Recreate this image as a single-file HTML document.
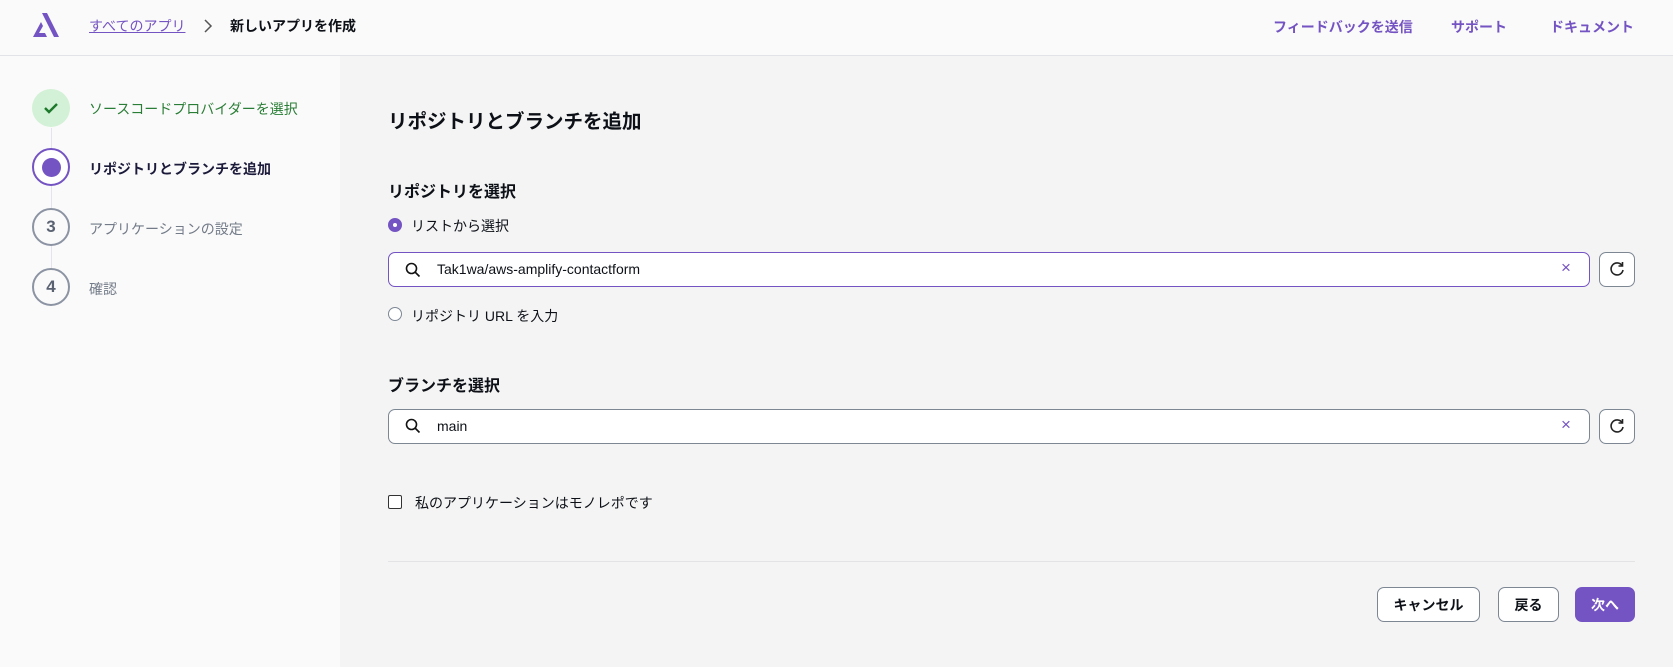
<!DOCTYPE html>
<html><head><meta charset="utf-8"><style>
*{box-sizing:border-box;margin:0;padding:0}
body{width:1673px;height:667px;overflow:hidden;background:#f4f4f4;font-family:"Liberation Sans","Noto Sans CJK JP",sans-serif;color:#0d1117;position:relative;font-size:14px}
.a{position:absolute;white-space:nowrap}
.hdr{position:absolute;left:0;top:0;width:1673px;height:56px;background:#fafafa;border-bottom:1px solid #e2e3e8}
.side{position:absolute;left:0;top:56px;width:340px;height:611px;background:#fafafa}
.p{color:#7453c2}
.circ{position:absolute;width:38px;height:38px;border-radius:50%;left:32px;display:flex;align-items:center;justify-content:center;font-weight:bold;font-size:17px;color:#5a6272}
.inp{position:absolute;left:388px;width:1202px;height:35px;background:#fff;border-radius:7px}
.rb{position:absolute;left:1599px;width:36px;height:35px;background:#fff;border:1px solid #7d8794;border-radius:7px}
.btn{position:absolute;top:587px;height:35px;border-radius:7px;border:1px solid #7d8794;background:#fff;font-weight:bold;font-size:14px;display:flex;align-items:center;justify-content:center}
</style></head><body>
<div class="hdr"></div>
<svg class="a" style="left:31px;top:13px" width="30" height="24" viewBox="0 0 30 24"><path d="M11 0h5l12 24h-5z" fill="#7453c2"/><path d="M10 9l-8 15h14l-2-4H8l4-7z" fill="#7453c2"/></svg>
<div class="a p" style="left:89px;top:16px;font-size:14px;text-decoration:underline">すべてのアプリ</div>
<svg class="a" style="left:203px;top:18px" width="10" height="16"><path d="M2 2l6 6-6 6" stroke="#555" stroke-width="1.5" fill="none"/></svg>
<div class="a" style="left:230px;top:16px;font-size:14px;font-weight:bold">新しいアプリを作成</div>
<div class="a p" style="left:1273px;top:17px;font-size:14px;font-weight:bold">フィードバックを送信</div>
<div class="a p" style="left:1451px;top:17px;font-size:14px;font-weight:bold">サポート</div>
<div class="a p" style="left:1550px;top:17px;font-size:14px;font-weight:bold">ドキュメント</div>
<div class="side"></div>
<div class="a" style="left:51px;top:128px;width:1px;height:160px;background:#e4e5ea"></div>
<div class="circ" style="top:89px;background:#d3f1d6"><svg width="16" height="14"><path d="M2 7l4 4 8-8" stroke="#1d7a2c" stroke-width="2.4" fill="none"/></svg></div>
<div class="circ" style="top:148px;border:2px solid #7453c2;background:#fff"><div style="width:19px;height:19px;border-radius:50%;background:#7453c2"></div></div>
<div class="circ" style="top:208px;border:2px solid #8c94a3;background:#fafafa">3</div>
<div class="circ" style="top:268px;border:2px solid #8c94a3;background:#fafafa">4</div>
<div class="a" style="left:89px;top:99px;color:#2a7d36">ソースコードプロバイダーを選択</div>
<div class="a" style="left:89px;top:159px;font-weight:bold;color:#1b1a3a">リポジトリとブランチを追加</div>
<div class="a" style="left:89px;top:219px;color:#737b88">アプリケーションの設定</div>
<div class="a" style="left:89px;top:279px;color:#737b88">確認</div>
<div class="a" style="left:388px;top:105px;font-size:19.5px;font-weight:bold">リポジトリとブランチを追加</div>
<div class="a" style="left:388px;top:178px;font-size:16px;font-weight:bold">リポジトリを選択</div>
<div class="a" style="left:388px;top:218px;width:14px;height:14px;border-radius:50%;background:#7453c2;border:1px solid #7453c2"><div style="margin:4px;width:4px;height:4px;border-radius:50%;background:#fff"></div></div>
<div class="a" style="left:411px;top:216px">リストから選択</div>
<div class="inp" style="top:252px;border:1.5px solid #7453c2"></div>
<svg class="a" style="left:405px;top:262px" width="16" height="16"><circle cx="6.5" cy="6.5" r="5" stroke="#111" stroke-width="1.6" fill="none"/><path d="M10 10l4.5 4.5" stroke="#111" stroke-width="1.6"/></svg>
<div class="a" style="left:437px;top:261px">Tak1wa/aws-amplify-contactform</div>
<div class="a p" style="left:1561px;top:258px;font-size:17px">×</div>
<div class="rb" style="top:252px"></div>
<svg class="a" style="left:1608px;top:260px" width="18" height="18"><path d="M14 5.5A6 6 0 1 0 15 10" stroke="#222" stroke-width="1.6" fill="none"/><path d="M14.5 2v4h-4" stroke="#222" stroke-width="1.6" fill="none"/></svg>
<div class="a" style="left:388px;top:307px;width:14px;height:14px;border-radius:50%;border:1.6px solid #7d8794;background:#fff"></div>
<div class="a" style="left:411px;top:306px">リポジトリ URL を入力</div>
<div class="a" style="left:388px;top:372px;font-size:16px;font-weight:bold">ブランチを選択</div>
<div class="inp" style="top:409px;border:1.5px solid #7d8794"></div>
<svg class="a" style="left:405px;top:418px" width="16" height="16"><circle cx="6.5" cy="6.5" r="5" stroke="#111" stroke-width="1.6" fill="none"/><path d="M10 10l4.5 4.5" stroke="#111" stroke-width="1.6"/></svg>
<div class="a" style="left:437px;top:418px">main</div>
<div class="a p" style="left:1561px;top:415px;font-size:17px">×</div>
<div class="rb" style="top:409px"></div>
<svg class="a" style="left:1608px;top:417px" width="18" height="18"><path d="M14 5.5A6 6 0 1 0 15 10" stroke="#222" stroke-width="1.6" fill="none"/><path d="M14.5 2v4h-4" stroke="#222" stroke-width="1.6" fill="none"/></svg>
<div class="a" style="left:388px;top:495px;width:14px;height:14px;border:1.6px solid #333;border-radius:2px;background:#fff"></div>
<div class="a" style="left:415px;top:493px">私のアプリケーションはモノレポです</div>
<div class="a" style="left:388px;top:561px;width:1247px;height:1px;background:#e3e3e6"></div>
<div class="btn" style="left:1377px;width:103px">キャンセル</div>
<div class="btn" style="left:1498px;width:61px">戻る</div>
<div class="btn" style="left:1575px;width:60px;background:#7453c2;border-color:#7453c2;color:#fff">次へ</div>
</body></html>
